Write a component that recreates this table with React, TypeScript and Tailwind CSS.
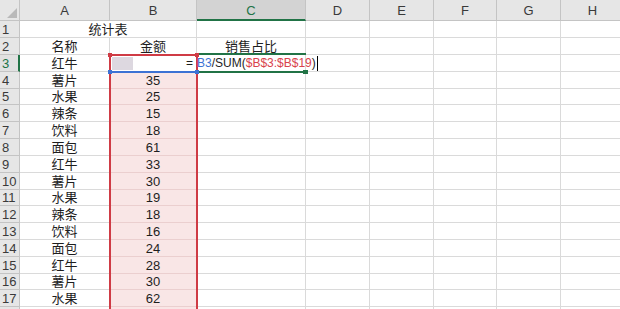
import React from 'react';

// column letters after the row-number gutter
const COLS = ['A', 'B', 'C', 'D', 'E', 'F', 'G', 'H'];

// 销售数据, rows 4-17 (row 18 is cut off at the bottom edge)
const ITEMS: [string, string][] = [
  ['薯片', '35'],
  ['水果', '25'],
  ['辣条', '15'],
  ['饮料', '18'],
  ['面包', '61'],
  ['红牛', '33'],
  ['薯片', '30'],
  ['水果', '19'],
  ['辣条', '18'],
  ['饮料', '16'],
  ['面包', '24'],
  ['红牛', '28'],
  ['薯片', '30'],
  ['水果', '62'],
];

const cell = 'border-r border-b border-[#dadada] flex items-center justify-center text-[13px] text-[#1e1e1e] leading-none';
const rowHead = 'border-r border-b border-[#c4c4c4] bg-[#e6e6e6] flex items-center pl-[2px] text-[13px] text-[#3a3a3a] leading-none';
const pink = 'border-r border-b border-[#ebcfcf] bg-[#f9e6e6] flex items-center justify-center text-[13px] text-[#1e1e1e] leading-none';

function EmptyCells({ from }: { from: number }) {
  return (
    <>
      {COLS.slice(from).map((c) => (
        <div key={c} className={cell} />
      ))}
    </>
  );
}

export default function App() {
  return (
    <div className="w-[620px] h-[309px] overflow-hidden bg-white font-['Liberation_Sans','Noto_Sans_CJK_SC',sans-serif]">
      <div className="relative">
        <div className="grid grid-cols-[20px_90px_87px_109px_64px_64px_63px_64px_64px] grid-rows-[21px_17px_17px_17px_17px_16px_17px_17px_17px_17px_17px_16px_17px_17px_17px_17px_16px_17px_17px]">
          {/* column headers */}
          <div className="relative border-r border-b border-[#c4c4c4] bg-[#e6e6e6]">
            <svg className="absolute right-[2px] bottom-[2px]" width="10" height="10" viewBox="0 0 10 10">
              <polygon points="10,0 10,10 0,10" fill="#b9b9b9" />
            </svg>
          </div>
          {COLS.map((c) =>
            c === 'C' ? (
              <div key={c} className="border-r border-[#c4c4c4] border-b-2 border-b-[#217346] bg-[#d3d3d3] flex items-center justify-center text-[13px] text-[#217346] pt-[2px]">
                {c}
              </div>
            ) : (
              <div key={c} className="border-r border-b border-[#c4c4c4] bg-[#e6e6e6] flex items-center justify-center text-[13px] text-[#3a3a3a] pt-[2px]">
                {c}
              </div>
            )
          )}

          {/* row 1: merged title */}
          <div className={rowHead}>1</div>
          <div className={`${cell} col-span-2`}>统计表</div>
          <EmptyCells from={2} />

          {/* row 2 */}
          <div className={rowHead}>2</div>
          <div className={cell}>名称</div>
          <div className={cell}>金额</div>
          <div className={cell}>销售占比</div>
          <EmptyCells from={3} />

          {/* row 3: C3 is being edited */}
          <div className="border-r-2 border-r-[#217346] border-b border-[#c4c4c4] bg-[#e1e1e1] flex items-center pl-[2px] text-[13px] text-[#217346] leading-none">3</div>
          <div className={cell}>红牛</div>
          <div className={`${cell} justify-start pl-[2px]`}>
            <div className="w-[21px] h-[13px] bg-[#ddd8e0]" />
          </div>
          <div className={cell} />
          <EmptyCells from={3} />

          {ITEMS.map(([name, amount], i) => (
            <React.Fragment key={i}>
              <div className={rowHead}>{i + 4}</div>
              <div className={cell}>{name}</div>
              <div className={pink}>{amount}</div>
              <EmptyCells from={2} />
            </React.Fragment>
          ))}

          {/* row 18, below the fold */}
          <div className={rowHead} />
          <div className={cell} />
          <div className={pink} />
          <EmptyCells from={2} />
        </div>

        {/* reference range $B$3:$B$19 */}
        <div className="absolute left-[109px] top-[54px] w-[89px] h-[300px] border-2 border-[#cf3b45]" />
        {/* reference B3 */}
        <div className="absolute left-[111px] top-[71px] w-[85px] h-[2px] bg-[#3d72d4]" />
        {/* active cell C3 */}
        <div className="absolute left-[198px] top-[53px] w-[108px] h-[2px] bg-[#217346]" />
        <div className="absolute left-[198px] top-[71px] w-[108px] h-[2px] bg-[#217346]" />

        {/* drag handles */}
        <div className="absolute left-[108px] top-[53px] w-[4px] h-[4px] bg-[#cf3b45]" />
        <div className="absolute left-[195px] top-[53px] w-[4px] h-[4px] bg-[#cf3b45]" />
        <div className="absolute left-[108px] top-[70px] w-[4px] h-[4px] bg-[#3d72d4]" />
        <div className="absolute left-[195px] top-[70px] w-[4px] h-[4px] bg-[#3d72d4]" />
        <div className="absolute left-[303px] top-[70px] w-[5px] h-[4px] bg-[#217346]" />

        {/* formula being typed */}
        <div className="absolute left-[186px] top-[55px] h-[16px] flex items-center text-[12px] leading-none text-[#1e1e1e] whitespace-nowrap">
          <span>=</span>
          <span className="ml-[4px] text-[#3d72d4]">B3</span>
          <span>/SUM(</span>
          <span className="text-[#d9434d]">$B$3:$B$19</span>
          <span>)</span>
          <span className="ml-[1px] w-px h-[15px] bg-black" />
        </div>
      </div>
    </div>
  );
}
